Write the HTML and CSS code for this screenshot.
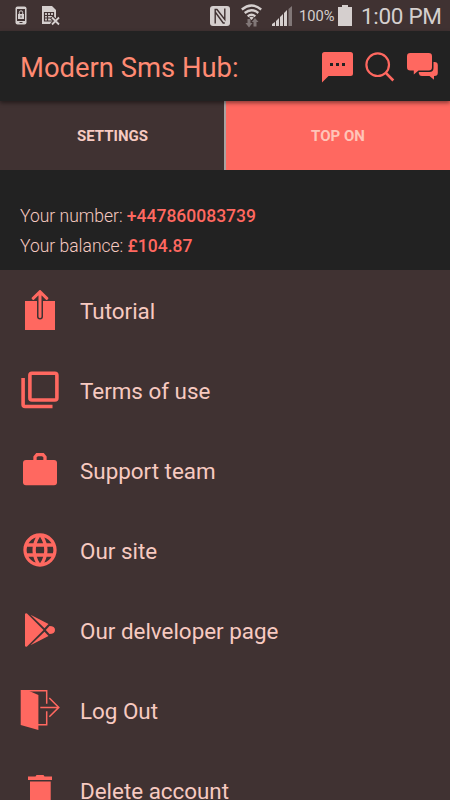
FILE: index.html
```html
<!DOCTYPE html>
<html lang="en">
<head>
<meta charset="utf-8">
<title>Modern Sms Hub</title>
<link rel="stylesheet" href="styles.css">
</head>
<body>
<div class="status">
  <svg class="phone" width="12" height="19" viewBox="0 0 12 19"><rect x=".5" y=".5" width="11" height="18" rx="2" fill="#d5cfce"/><path d="M2 3h8v12H2z" fill="#403232"/><path d="M3 8h6v5H3z" fill="#d5cfce"/><path d="M4.300 8V6.500a1.700 1.700 0 0 1 3.400 0V8" fill="none" stroke="#d5cfce"/><path d="M5.500 9.500h1v2h-1zM4.500 16h3v1h-3z" fill="#403232"/></svg>
  <svg class="sim" width="20" height="21" viewBox="0 0 20 21"><path d="M1 1h10l4 4v14H1z" fill="#d5cfce"/><path d="M3.500 7.500h9v8.500h-9zM3.500 10.500h9M3.500 13h9M6.500 7.500v8.500M9.500 7.500v3" fill="none" stroke="#403232" stroke-width="1.200"/><path d="m10.500 12 8 8m0-8-8 8" stroke="#403232" stroke-width="4"/><path d="m11 12.500 7 7m0-7-7 7" stroke="#d5cfce" stroke-width="1.800"/></svg>
  <svg class="nfc" width="20" height="20" viewBox="0 0 20 20"><rect width="20" height="20" rx="3" fill="#d5cfce"/><path d="M5.200 17.500V3.500H7L14.800 13.500V2.500M5.200 6l8 11h1.600" fill="none" stroke="#403232" stroke-width="1.400"/></svg>
  <svg class="wifi" width="21" height="24" viewBox="0 0 21 24"><g fill="none" stroke="#d5cfce" stroke-width="2.300"><path d="M.8 5.500q9.700-8 19.400 0M3.700 9q6.800-5.600 13.600 0M6.700 12.300q3.800-3 7.600 0"/></g><path d="m8.200 13.500 2.300 2.500 2.300-2.500q-2.300-1.600-4.600 0" fill="#d5cfce"/><path d="M6.500 15h3v4h2L8 23.500 4.500 19h2zM12.500 22.500h3V18h2L14 14l-3.200 4h1.700z" fill="#817777"/></svg>
  <svg class="signal" width="21" height="20" viewBox="0 0 21 20"><path d="M0 20v-2l3-2v4zM4 20v-5l3-3v8zM8 20v-9l3-3v12zM12 20V7l3-3v16z" fill="#d5cfce"/><path d="M16.500 20V3L20 0v20z" fill="#817777"/></svg>
  <span class="percent">100%</span>
  <svg class="battery" width="14" height="21" viewBox="0 0 14 21"><path d="M4 0h6v2h4v19H0V2h4z" fill="#d5cfce"/></svg>
  <span class="time">1:00 PM</span>
</div>
<header class="bar">
  <h1>Modern Sms Hub:</h1>
  <svg class="chat" width="31" height="31" viewBox="0 0 31 31"><path d="M2.500 0h26A2.500 2.500 0 0 1 31 2.500v19a2.500 2.500 0 0 1-2.500 2.500H6.500L0 30.500v-28A2.500 2.500 0 0 1 2.500 0z"/><path class="cut" d="M8 11h3v3H8zM14 11h3v3h-3zM20 11h3v3h-3z"/></svg>
  <svg class="search" width="30" height="30" viewBox="0 0 30 30"><g class="line"><circle cx="12.700" cy="12.700" r="11.300" stroke-width="2.200"/><path d="m20.800 20.800 7.500 7.700" stroke-width="2.600"/></g></svg>
  <svg class="forum" width="31" height="28" viewBox="0 0 31 28"><path d="M26.500 9h1a3.300 3.300 0 0 1 3.300 3.300v7.500a3.300 3.300 0 0 1-3.300 3.300H27v3.600l-4.500-3.600H15a3.200 3.200 0 0 1-3.200-2.600V19h10.700a4 4 0 0 0 4-4z"/><path d="M3.300 0h18.400A3.300 3.300 0 0 1 25 3.300v10.900a3.300 3.300 0 0 1-3.300 3.300H11.500L6.800 21.600v-4.100H3.300A3.300 3.300 0 0 1 0 14.200V3.300A3.300 3.300 0 0 1 3.300 0z"/></svg>
</header>
<nav class="tabs">
  <a class="tab">SETTINGS</a>
  <a class="tab active">TOP ON</a>
</nav>
<section class="info">
  <p>Your number: <b>+447860083739</b></p>
  <p>Your balance: <b>£104.87</b></p>
</section>
<ul class="menu">
  <li><svg viewBox="0 0 40 40"><path d="M5 11h30v29H5z"/><path d="M20 10v16.500" fill="none" stroke="#403232" stroke-width="6" stroke-linecap="round"/><path class="line" d="M20 2v24.500M13.200 8.300 20 1.700l6.800 6.600" stroke-width="3" stroke-linecap="round"/></svg><span>Tutorial</span></li>
  <li><svg viewBox="0 0 40 40"><g class="line" stroke-width="3.600"><rect x="9.900" y="3.200" width="27" height="26.800" rx="2"/><path d="M3.100 8v26.500a2 2 0 0 0 2 2h27.400"/></g></svg><span>Terms of use</span></li>
  <li><svg viewBox="0 0 40 40"><rect x="3" y="10" width="34" height="25.200" rx="3"/><path class="line" d="M15 11V7l2-2.300h6L25 7v4" stroke-width="3.300"/></svg><span>Support team</span></li>
  <li><svg viewBox="0 0 24 24"><path d="M11.990 2C6.470 2 2 6.480 2 12s4.470 10 9.990 10C17.520 22 22 17.520 22 12S17.520 2 11.990 2zm6.930 6h-2.950c-.32-1.250-.78-2.450-1.380-3.560 1.840.63 3.370 1.910 4.330 3.560zM12 4.040c.83 1.200 1.480 2.530 1.910 3.960h-3.820c.43-1.430 1.080-2.760 1.910-3.960zM4.260 14C4.100 13.360 4 12.690 4 12s.1-1.360.26-2h3.380c-.08.66-.14 1.320-.14 2s.06 1.340.14 2H4.260zm.82 2h2.950c.32 1.250.78 2.450 1.380 3.560-1.840-.63-3.370-1.900-4.330-3.560zm2.950-8H5.080c.96-1.660 2.490-2.930 4.330-3.560C8.810 5.550 8.350 6.750 8.030 8zM12 19.960c-.83-1.200-1.480-2.530-1.910-3.960h3.820c-.43 1.430-1.080 2.760-1.910 3.960zM14.340 14H9.660c-.09-.66-.16-1.320-.16-2s.07-1.350.16-2h4.680c.09.65.16 1.320.16 2s-.07 1.340-.16 2zm.25 5.560c.6-1.110 1.060-2.310 1.380-3.560h2.950c-.96 1.650-2.490 2.930-4.330 3.560zM16.360 14c.08-.66.14-1.320.14-2s-.06-1.340-.14-2h3.380c.16.640.26 1.310.26 2s-.1 1.360-.26 2h-3.380z"/></svg><span>Our site</span></li>
  <li><svg viewBox="0 0 40 40"><path d="M5 4.300q.3-1.500 2-.8L23.500 20 7 36.500q-1.700.7-2-.8zM10.500 4.800 28.500 14l-4 4.300zM10.500 35.200l18-9.200-4-4.300zM29.500 16q5.500 0 5.500 4t-5.500 4l-3.700-4z"/></svg><span>Our delveloper page</span></li>
  <li><svg viewBox="0 0 40 40"><path d="M.7 0H7l11.400 5v35L.7 35z"/><path class="line" d="M3 .8h23.700v12.900M26.700 21.300v13.400H18M20.300 17.400H39M29.300 8l9.500 9.400-9.500 9.400" stroke-width="1.500"/></svg><span>Log Out</span></li>
  <li><svg viewBox="0 0 40 40"><path d="M8 6.500h7.500l1-1.500h7l1 1.500H32V10H8zM10 11.600h20.700V40H10z"/></svg><span>Delete account</span></li>
</ul>
</body>
</html>
```
FILE: styles.css
```css
* { box-sizing: border-box; margin: 0; padding: 0; }
body { width: 450px; height: 800px; overflow: hidden; background: #403232; font-family: Roboto, sans-serif; color: #f7cac1; }
svg { flex: none; display: block; fill: #ff6860; }
.line { fill: none; stroke: #ff6860; }
.cut { fill: #222; }

.status { display: flex; align-items: center; height: 31px; color: #d5cfce; white-space: nowrap; }
.phone { margin-left: 15px; }
.sim { margin-left: 14px; }
.nfc { margin-left: 149px; }
.wifi { margin-left: 11px; }
.signal { margin: 1px 0 0 10px; }
.percent { width: 36px; margin-left: 6px; font-size: 14.700px; }
.battery { margin-left: 3px; }
.time { margin-left: 9px; font-size: 22.500px; letter-spacing: -.3px; }

.bar { position: relative; display: flex; align-items: center; height: 70px; padding: 2px 12px 0 20px; background: #222; box-shadow: 0 2px 4px rgba(0, 0, 0, .45); }
h1 { flex: 1; padding-top: 2px; font-size: 27.400px; line-height: 32px; font-weight: 400; color: #ff8a73; white-space: nowrap; }
.search { margin-left: 12px; }
.forum { margin-left: 12px; }

.tabs { display: grid; grid-template-columns: 224px 1fr; height: 69px; }
.tab { display: flex; align-items: center; justify-content: center; padding-left: 1px; font-size: 15px; font-weight: 700; }
.tab.active { padding-left: 0; background: #ff6860; border-left: 2px solid #a9a2a1; color: #ffc4b8; }

.info { height: 100px; padding: 30.500px 20px 0; background: #222; font-size: 17.500px; font-weight: 300; line-height: 30px; }
.info b { font-weight: 500; color: #ff6860; }

.menu { list-style: none; }
.menu li { display: flex; align-items: center; gap: 20px; height: 80px; padding: 0 20px; font-size: 22.400px; white-space: nowrap; }
.menu svg { width: 40px; height: 40px; }
.menu span { padding-top: 2px; line-height: 26px; }
```
